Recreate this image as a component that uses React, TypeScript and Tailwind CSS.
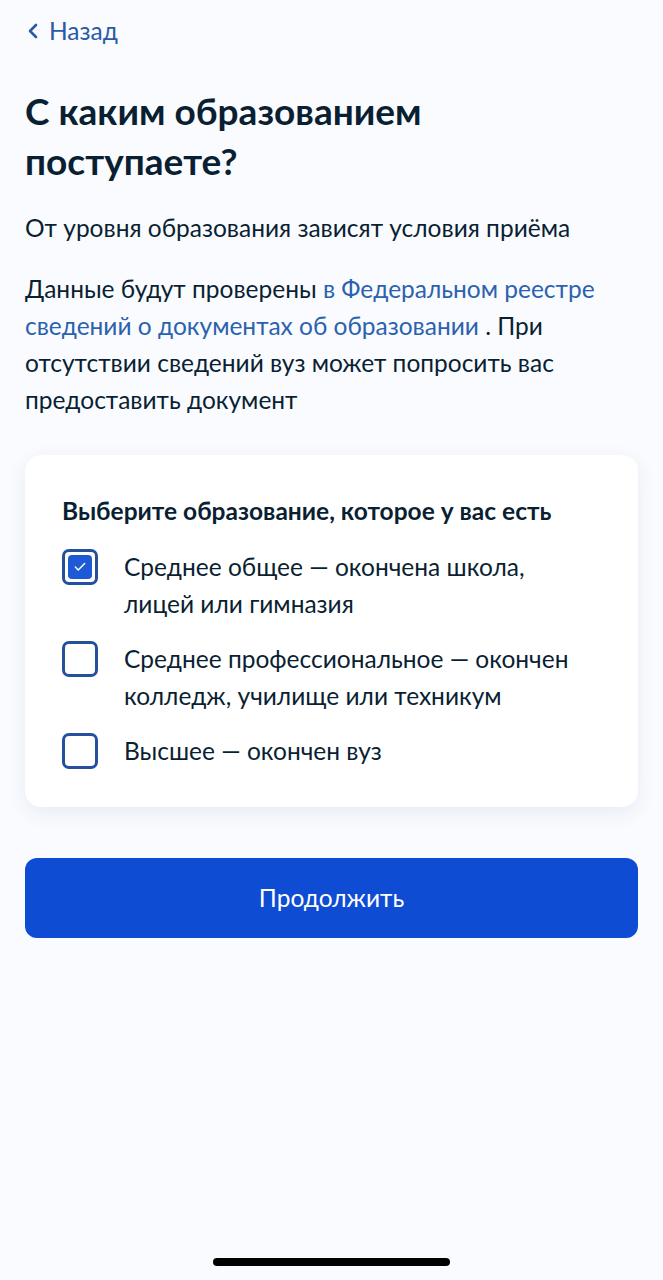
import { Check, ChevronLeft } from 'lucide-react';
import { useState } from 'react';

const options = [
  { id: 'school', label: 'Среднее общее — окончена школа, лицей или гимназия' },
  { id: 'college', label: 'Среднее профессиональное — окончен колледж, училище или техникум' },
  { id: 'uni', label: 'Высшее — окончен вуз' },
];

const Box = ({ checked }: { checked: boolean }) => (
  <span className="flex h-[36px] w-[36px] shrink-0 items-center justify-center rounded-[7px] border-[3px] border-[#24519c] bg-white p-[3px]">
    {checked && (
      <span className="flex h-full w-full items-center justify-center rounded-[4px] bg-[#1f5ad6]">
        <Check className="h-[14px] w-[14px] text-white" strokeWidth={2.5} />
      </span>
    )}
  </span>
);

export default function App() {
  const [selected, setSelected] = useState<string[]>(['school']);

  const toggle = (id: string) =>
    setSelected((prev) => (prev.includes(id) ? prev.filter((x) => x !== id) : [...prev, id]));

  return (
    <div className="flex min-h-[1280px] flex-col bg-[#f9fbfe] font-['Lato',sans-serif] text-[#0b1f33]">
      <div className="px-[25px] pt-[16px]">
        <button className="flex items-center gap-[4px] text-[24.5px] leading-[30px] text-[#2a5aa5]">
          <ChevronLeft className="-ml-[4px] h-[24px] w-[24px]" strokeWidth={2.6} />
          Назад
        </button>

        <h1 className="mt-[40px] text-[37px] font-bold leading-[50px]">
          С каким образованием
          <br />
          поступаете?
        </h1>

        <p className="mt-[23px] text-[24.5px] leading-[37px]">От уровня образования зависят условия приёма</p>

        <p className="mt-[24px] text-[24.5px] leading-[37px]">
          Данные будут проверены{' '}
          <a className="text-[#2b62ae]">в Федеральном реестре сведений о документах об образовании</a> . При
          отсутствии сведений вуз может попросить вас предоставить документ
        </p>

        <div className="mt-[37px] rounded-[16px] bg-white pb-[38px] pl-[37px] pr-[48px] pt-[40px] shadow-[0_6px_20px_rgba(20,50,110,0.08)]">
          <h2 className="text-[24.5px] font-bold leading-[32px]">Выберите образование, которое у вас есть</h2>
          <div className="mt-[21px] flex flex-col gap-[18px]">
            {options.map((o) => (
              <label key={o.id} className="flex cursor-pointer items-start gap-[26px]" onClick={() => toggle(o.id)}>
                <span className="pt-[1px]">
                  <Box checked={selected.includes(o.id)} />
                </span>
                <span className="text-[24.5px] leading-[37px]">{o.label}</span>
              </label>
            ))}
          </div>
        </div>

        <button className="mt-[51px] flex h-[80px] w-full items-center justify-center rounded-[12px] bg-[#0d4cd3] text-[24.5px] text-white">
          Продолжить
        </button>
      </div>

      <div className="mt-auto flex justify-center pb-[14px]">
        <div className="h-[8px] w-[237px] rounded-full bg-black" />
      </div>
    </div>
  );
}
